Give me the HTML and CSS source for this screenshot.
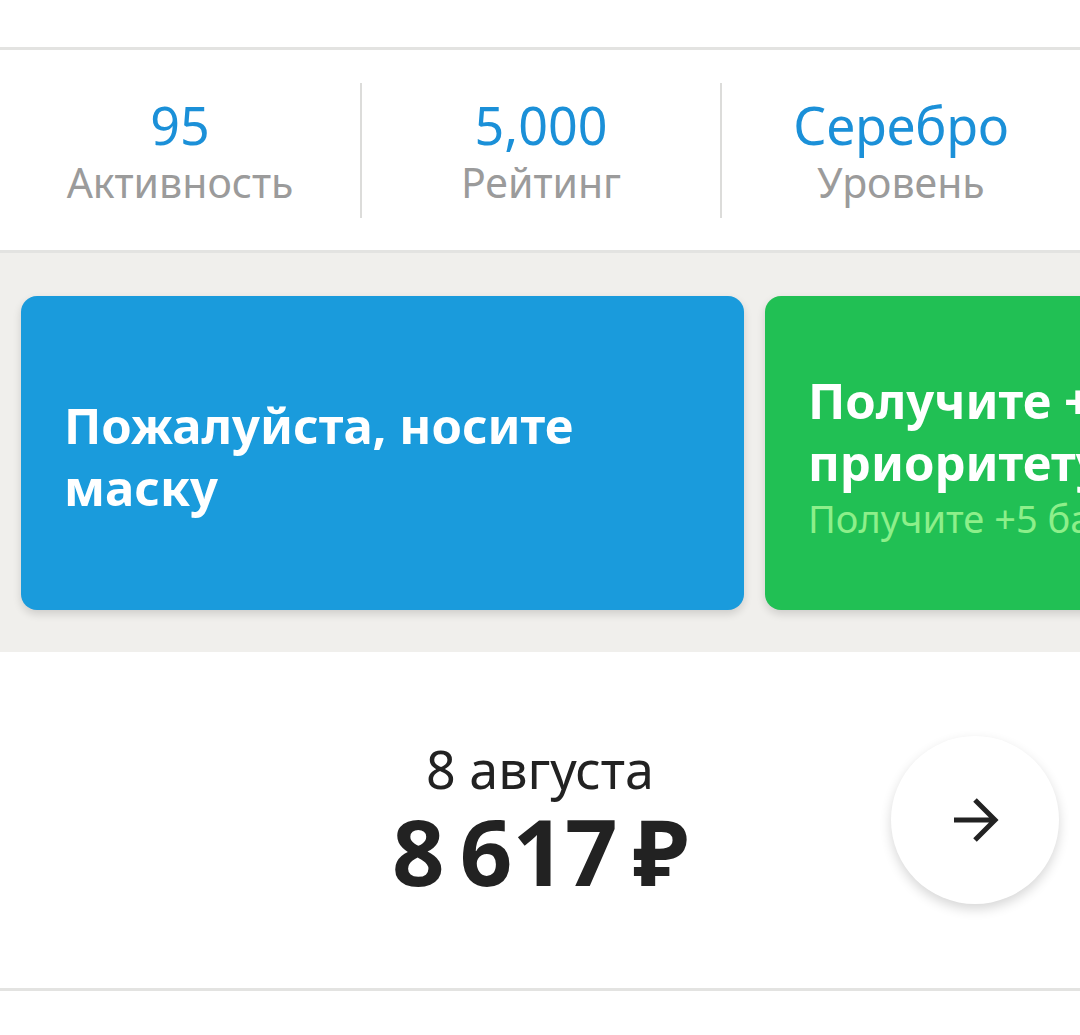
FILE: index.html
```html
<!DOCTYPE html>
<html lang="ru">
<head>
    <meta charset="UTF-8">
    <meta name="viewport" content="width=device-width, initial-scale=1.0">
    <title>Профиль</title>
    <link rel="stylesheet" href="styles.css">
</head>
<body>
    <div class="top-space"></div>

    <section class="stats">
        <div class="stat">
            <p class="stat-value">95</p>
            <p class="stat-label">Активность</p>
        </div>
        <div class="stat">
            <p class="stat-value">5,000</p>
            <p class="stat-label">Рейтинг</p>
        </div>
        <div class="stat">
            <p class="stat-value">Серебро</p>
            <p class="stat-label">Уровень</p>
        </div>
    </section>

    <section class="promo">
        <div class="promo-card promo-blue">
            <p class="promo-title">Пожалуйста, носите маску</p>
        </div>
        <div class="promo-card promo-green">
            <div>
                <p class="promo-title">Получите +5 к приоритету</p>
                <p class="promo-text">Получите +5 баллов к приоритету на неделю</p>
            </div>
        </div>
    </section>

    <section class="earnings">
        <div></div>
        <div class="earnings-info">
            <p class="earnings-date">8 августа</p>
            <p class="earnings-sum">8&#8239;617&#8239;₽</p>
        </div>
        <button class="next-button" aria-label="Далее">
            <svg width="48" height="48" viewBox="0 0 48 48">
                <path d="M3 24 H44 M24 4 L44 24 L24 44" fill="none" stroke="#222" stroke-width="5"/>
            </svg>
        </button>
    </section>
</body>
</html>
```

FILE: styles.css
```css
body {
    margin: 0;
    background-color: #ffffff;
    font-family: "Noto Sans", "Open Sans", sans-serif;
    width: 1080px;
    overflow: hidden;
}

p {
    margin: 0;
}

.top-space {
    height: 47px;
}

.stats {
    display: grid;
    grid-template-columns: repeat(3, 1fr);
    border-top: 3px solid #e3e3e1;
    border-bottom: 3px solid #e3e3e1;
    padding: 33px 0 32px;
}

.stat {
    height: 135px;
    display: flex;
    flex-direction: column;
    justify-content: center;
    align-items: center;
    padding-top: 2px;
    box-sizing: border-box;
}

.stat + .stat {
    border-left: 2px solid #dcdcda;
}

.stat-value {
    font-size: 52px;
    line-height: 60px;
    color: #1b90d8;
}

.stat-label {
    font-size: 41px;
    line-height: 54px;
    color: #9b9b9b;
}

.promo {
    display: flex;
    gap: 21px;
    background-color: #f0efec;
    padding: 43px 0 42px 21px;
    overflow: hidden;
}

.promo-card {
    flex: 0 0 723px;
    height: 314px;
    box-sizing: border-box;
    border-radius: 16px;
    padding: 6px 43px 0;
    display: flex;
    align-items: center;
    overflow: hidden;
    box-shadow: 0 4px 8px rgba(0, 0, 0, 0.14);
}

.promo-blue {
    background-color: #1a9bdc;
}

.promo-green {
    background-color: #21c054;
}

.promo-title {
    font-size: 49px;
    line-height: 62px;
    font-weight: bold;
    color: #ffffff;
    max-width: 600px;
}

.promo-text {
    font-size: 38px;
    line-height: 50px;
    color: #8def8a;
    white-space: nowrap;
}

.earnings {
    height: 336px;
    display: grid;
    grid-template-columns: 1fr auto 1fr;
    align-items: center;
    border-bottom: 3px solid #e3e3e1;
}

.earnings-info {
    text-align: center;
    color: #222222;
    padding-bottom: 2px;
}

.earnings-date {
    font-size: 52px;
    line-height: 62px;
}

.earnings-sum {
    font-size: 92px;
    line-height: 100px;
    font-weight: bold;
    letter-spacing: -3px;
    margin-top: 1px;
}

.next-button {
    justify-self: end;
    margin-right: 21px;
    width: 168px;
    height: 168px;
    border: none;
    border-radius: 50%;
    background-color: #ffffff;
    box-shadow: 0 5px 12px rgba(0, 0, 0, 0.16);
    display: flex;
    justify-content: center;
    align-items: center;
    padding: 0;
    cursor: pointer;
}
```
